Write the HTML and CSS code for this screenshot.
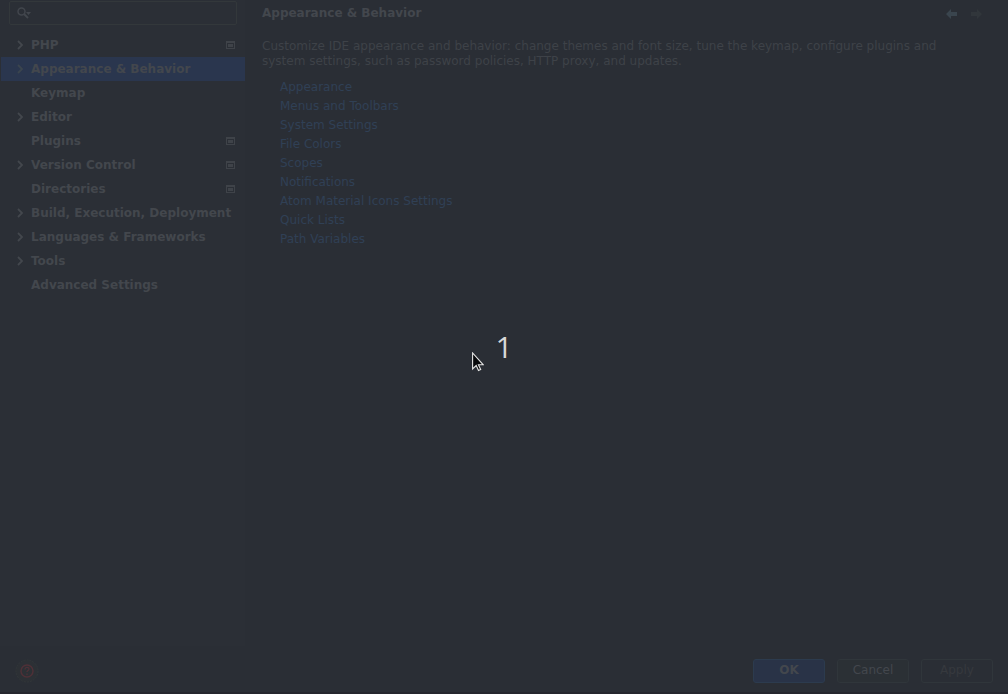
FILE: index.html
```
<!DOCTYPE html>
<html lang="en">
<head>
<meta charset="utf-8">
<title>Settings</title>
<link rel="stylesheet" href="styles.css">
</head>
<body>
<svg class="defs" aria-hidden="true">
  <symbol id="chevron" viewBox="0 0 7 10"><path d="M1 1l4 4-4 4" fill="none" stroke="currentColor" stroke-width="1.800"/></symbol>
  <symbol id="project" viewBox="0 0 9 8"><path d="M0 0h9v8H0zM1 2v5h7V2zM2 3h5v3H2z" fill="currentColor" fill-rule="evenodd"/></symbol>
</svg>
<div class="dialog">
  <div class="body">
    <aside class="sidebar">
      <label class="search">
        <svg width="14" height="12" viewBox="0 0 14 12" aria-hidden="true"><circle cx="4.500" cy="4.500" r="3.500" fill="none" stroke="currentColor" stroke-width="1.500"/><path d="M7 7l4 4" stroke="currentColor" stroke-width="2"/><path d="M9 5h5l-2.500 3z" fill="currentColor"/></svg>
        <input type="search" aria-label="Search settings">
      </label>
      <nav class="tree">
        <a class="item" href="#"><svg class="chevron"><use href="#chevron"/></svg><span class="name">PHP</span><svg class="project"><use href="#project"/></svg></a>
        <a class="item selected" href="#"><svg class="chevron"><use href="#chevron"/></svg><span class="name">Appearance &amp; Behavior</span></a>
        <a class="item leaf" href="#"><span class="name">Keymap</span></a>
        <a class="item" href="#"><svg class="chevron"><use href="#chevron"/></svg><span class="name">Editor</span></a>
        <a class="item leaf" href="#"><span class="name">Plugins</span><svg class="project"><use href="#project"/></svg></a>
        <a class="item" href="#"><svg class="chevron"><use href="#chevron"/></svg><span class="name">Version Control</span><svg class="project"><use href="#project"/></svg></a>
        <a class="item leaf" href="#"><span class="name">Directories</span><svg class="project"><use href="#project"/></svg></a>
        <a class="item" href="#"><svg class="chevron"><use href="#chevron"/></svg><span class="name">Build, Execution, Deployment</span></a>
        <a class="item" href="#"><svg class="chevron"><use href="#chevron"/></svg><span class="name">Languages &amp; Frameworks</span></a>
        <a class="item" href="#"><svg class="chevron"><use href="#chevron"/></svg><span class="name">Tools</span></a>
        <a class="item leaf" href="#"><span class="name">Advanced Settings</span></a>
      </nav>
    </aside>
    <main class="content">
      <header class="heading">
        <h1>Appearance &amp; Behavior</h1>
        <div class="history">
          <button class="arrow" aria-label="Back"><svg width="11" height="10" viewBox="0 0 11 10"><path d="M0 5l5-5v3h6v4H5v3z" fill="currentColor"/></svg></button>
          <button class="arrow forward" aria-label="Forward" disabled><svg width="11" height="10" viewBox="0 0 11 10"><path d="M11 5L6 0v3H0v4h6v3z" fill="currentColor"/></svg></button>
        </div>
      </header>
      <p class="intro">Customize IDE appearance and behavior: change themes and font size, tune the keymap, configure plugins and system settings, such as password policies, HTTP proxy, and updates.</p>
      <ul class="links">
        <li><a href="#">Appearance</a></li>
        <li><a href="#">Menus and Toolbars</a></li>
        <li><a href="#">System Settings</a></li>
        <li><a href="#">File Colors</a></li>
        <li><a href="#">Scopes</a></li>
        <li><a href="#">Notifications</a></li>
        <li><a href="#">Atom Material Icons Settings</a></li>
        <li><a href="#">Quick Lists</a></li>
        <li><a href="#">Path Variables</a></li>
      </ul>
    </main>
  </div>
  <footer class="footer">
    <button class="help" aria-label="Help"><svg width="24" height="24" viewBox="0 0 24 24"><circle cx="12" cy="12" r="11" fill="#2c3035" stroke="#32373a" stroke-dasharray="2 1"/><circle cx="12" cy="12" r="6" fill="none" stroke="#4e3037" stroke-width="1.500"/><path d="M10 10.500c0-3 4-2.500 4-.5 0 1.500-2 1.500-2 3M12 14.500v1.500" fill="none" stroke="#4e3037" stroke-width="1.300"/></svg></button>
    <div class="actions">
      <button class="btn ok">OK</button>
      <button class="btn cancel">Cancel</button>
      <button class="btn apply" disabled>Apply</button>
    </div>
  </footer>
  <div class="countdown">1</div>
  <svg class="cursor" width="12" height="20" viewBox="0 0 12 20" aria-hidden="true"><path d="M.6 1v16l3.600-3.500 2.300 5 2.200-1-2.300-4.700h4.900z" fill="#08090b" stroke="#e4e4e4" stroke-width="1.100"/></svg>
</div>
</body>
</html>
```
FILE: styles.css
```
* { box-sizing: border-box; }
body {
  margin: 0;
  background: #2a2e35;
  color: #43474d;
  font: 12px/15px "DejaVu Sans", sans-serif;
}
.defs { position: absolute; width: 0; height: 0; }
a { color: inherit; text-decoration: none; }
button { font: inherit; color: inherit; padding: 0; border: 0; background: none; }
.dialog {
  position: relative;
  display: flex;
  flex-direction: column;
  min-height: 100vh;
  border-bottom: 2px solid #25262e;
}
.body { flex: 1; display: flex; }
.sidebar { width: 245px; background: #2b2f36; }
.search {
  display: flex;
  align-items: center;
  height: 24px;
  margin: 1px 8px 8px 9px;
  padding: 0 7px;
  border: 1px solid #33383b;
  border-radius: 2px;
  color: #42464d;
}
.search input {
  flex: 1;
  min-width: 0;
  border: 0;
  outline: 0;
  background: none;
  color: inherit;
  font: inherit;
}
.item {
  display: flex;
  align-items: center;
  height: 24px;
  margin-left: 1px;
  padding: 0 10px 0 16px;
  font-weight: bold;
  white-space: nowrap;
}
.leaf { padding-left: 30px; }
.selected { background: #2a364e; }
.selected .chevron { color: #3b454e; }
.chevron { width: 7px; height: 10px; margin-right: 7px; }
.name { flex: 1; }
.project { width: 9px; height: 8px; color: #3f4349; }
.content { flex: 1; padding: 6px 17px; }
.heading { display: flex; justify-content: space-between; align-items: center; }
h1 { margin: 0; font-size: 12px; line-height: 15px; }
.history { display: flex; gap: 14px; padding-right: 9px; }
.arrow { display: flex; color: #3a454e; }
.forward { color: #31363b; }
.intro { max-width: 700px; margin: 18px 0 9px; color: #3e4248; }
.links { margin: 0; padding: 0 0 0 18px; list-style: none; line-height: 19px; color: #304055; }
.footer {
  display: flex;
  justify-content: space-between;
  align-items: center;
  height: 46px;
  padding: 3px 15px 0;
}
.help { display: flex; }
.actions { display: flex; gap: 12px; }
.btn {
  width: 72px;
  height: 24px;
  border: 1px solid #30363b;
  border-radius: 3px;
}
.ok { background: #293347; border-color: #2c3b4e; font-weight: bold; }
.cancel { background: #2b3035; }
.apply { color: #36393e; }
.countdown {
  position: absolute;
  left: 50%;
  top: 50%;
  transform: translate(-50%, -50%);
  margin-top: 1px;
  color: #d8d8d8;
  font: 30px/40px "Open Sans", sans-serif;
}
.cursor { position: absolute; left: 472px; top: 352px; }
```
